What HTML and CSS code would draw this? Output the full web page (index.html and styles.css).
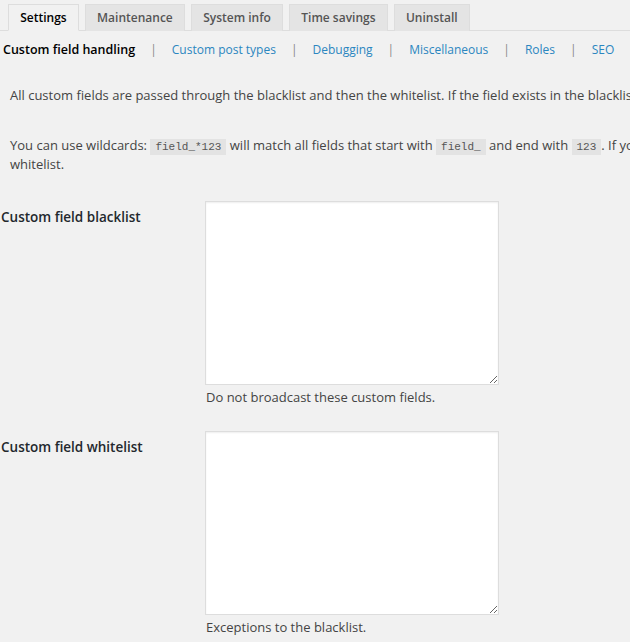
FILE: index.html
```html
<!DOCTYPE html>
<html lang="en">
<head>
    <meta charset="UTF-8">
    <meta name="viewport" content="width=device-width, initial-scale=1.0">
    <title>Broadcast - Custom field handling</title>
    <link rel="stylesheet" href="styles.css">
</head>
<body>
    <div class="wrap">
        <h2 class="nav-tab-wrapper">
            <a class="nav-tab nav-tab-active" href="#">Settings</a>
            <a class="nav-tab" href="#">Maintenance</a>
            <a class="nav-tab" href="#">System info</a>
            <a class="nav-tab" href="#">Time savings</a>
            <a class="nav-tab" href="#">Uninstall</a>
        </h2>

        <ul class="subsubsub">
            <li class="current">Custom field handling</li>
            <li class="sep">|</li>
            <li><a href="#">Custom post types</a></li>
            <li class="sep">|</li>
            <li><a href="#">Debugging</a></li>
            <li class="sep">|</li>
            <li><a href="#">Miscellaneous</a></li>
            <li class="sep">|</li>
            <li><a href="#">Roles</a></li>
            <li class="sep">|</li>
            <li><a href="#">SEO</a></li>
        </ul>

        <div class="intro">
            <p>All custom fields are passed through the blacklist and then the whitelist. If the field exists in the blacklist and not in the whitelist, it will not be broadcasted.</p>
            <p>You can use wildcards: <code>field_*123</code> will match all fields that start with <code>field_</code> and end with <code>123</code>. If you want to broadcast some of the blacklisted fields anyway, add them to the<br>whitelist.</p>
        </div>

        <form class="form-table">
            <div class="row">
                <label class="row-label" for="blacklist">Custom field blacklist</label>
                <div class="row-field">
                    <textarea id="blacklist"></textarea>
                    <p class="description">Do not broadcast these custom fields.</p>
                </div>
            </div>
            <div class="row">
                <label class="row-label" for="whitelist">Custom field whitelist</label>
                <div class="row-field">
                    <textarea id="whitelist"></textarea>
                    <p class="description">Exceptions to the blacklist.</p>
                </div>
            </div>
        </form>
    </div>
</body>
</html>
```

FILE: styles.css
```css
html, body {
    overflow: hidden;
}
body {
    margin: 0;
    background-color: #f1f1f1;
    color: #444;
    font-family: "Open Sans", sans-serif;
    font-size: 13px;
}
.wrap {
    width: 1400px;
    padding-top: 4px;
}
a {
    color: #2b86c0;
    text-decoration: none;
}
.nav-tab-wrapper {
    display: flex;
    gap: 6px;
    margin: 0;
    padding: 0 0 0 8px;
    border-bottom: 1px solid #ddd;
}
.nav-tab {
    margin-bottom: -1px;
    padding: 4px 11.2px;
    border: 1px solid #ddd;
    border-bottom: none;
    background: #e4e4e4;
    color: #555;
    font-size: 12px;
    font-weight: 600;
    line-height: 17px;
}
.nav-tab-active {
    background: #f1f1f1;
    color: #000;
    border-bottom: 1px solid #f1f1f1;
}
.subsubsub {
    display: flex;
    list-style: none;
    margin: 8px 0 0;
    padding: 0 0 0 3px;
    font-size: 12px;
    line-height: 22px;
}
.subsubsub .current {
    color: #000;
    font-size: 12.5px;
    font-weight: 600;
}
.subsubsub .sep {
    margin: 0 15px;
    color: #888;
}
.intro {
    padding: 25px 10px 0;
}
.intro p {
    margin: 0 0 31px;
    line-height: 19px;
}
.intro p:last-child {
    margin-bottom: 27px;
}
code {
    padding: 2px 5px;
    background: #e3e3e3;
    color: #555;
    font-family: "Liberation Mono", monospace;
    font-size: 11px;
    line-height: 1;
}
.row {
    display: grid;
    grid-template-columns: 205px 294px;
    margin-bottom: 26px;
}
.row-label {
    padding: 7px 0 0 1px;
    color: #23282d;
    font-size: 13.5px;
    font-weight: 600;
}
.row-field textarea {
    display: block;
    box-sizing: border-box;
    width: 294px;
    height: 184px;
    margin: 0;
    border: 1px solid #ddd;
    box-shadow: inset 0 1px 2px rgba(0, 0, 0, 0.07);
    background: #fff;
}
.description {
    margin: 4px 0 0 1px;
    line-height: 16px;
}
```
